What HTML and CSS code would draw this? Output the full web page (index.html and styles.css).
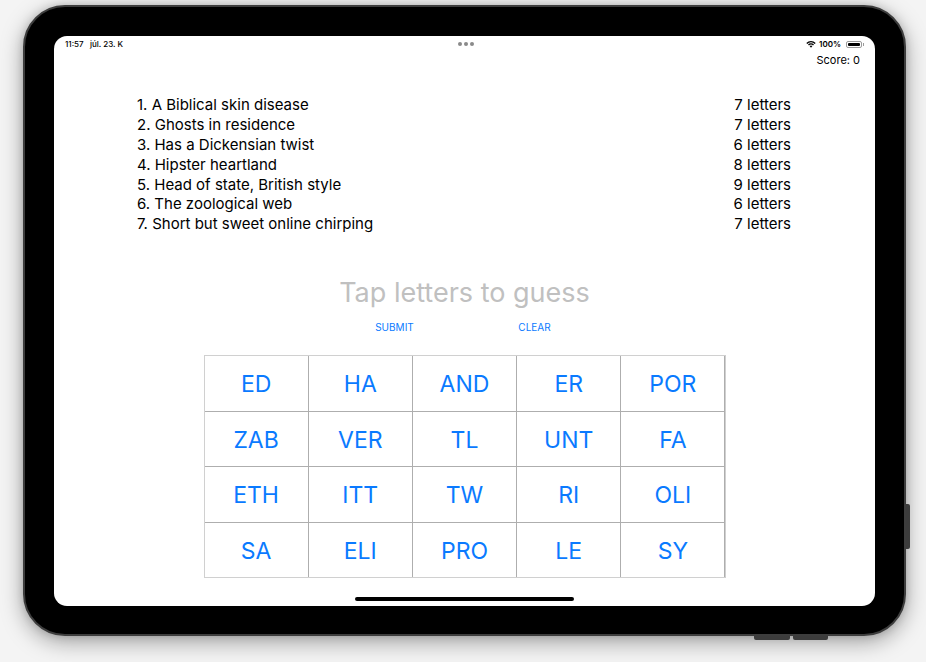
FILE: index.html
```html
<!DOCTYPE html>
<html>
<head>
<meta charset="utf-8">
<link rel="stylesheet" href="styles.css">
</head>
<body>
<div class="device">
  <div class="side-btn"></div>
  <div class="vol vol-a"></div>
  <div class="vol vol-b"></div>
  <div class="screen">
    <div class="status">
      <div class="status-left">11:57&nbsp;&nbsp; júl. 23. K</div>
      <div class="status-dots"><span></span><span></span><span></span></div>
      <div class="status-right">
        <svg class="wifi" width="10" height="8" viewBox="0 0 10 8">
          <path d="M0.3 2.9 A6.6 6.6 0 0 1 9.7 2.9 L8.7 3.9 A5.2 5.2 0 0 0 1.3 3.9 Z" fill="#000"/>
          <path d="M2.0 4.6 A4.2 4.2 0 0 1 8.0 4.6 L7.0 5.6 A2.8 2.8 0 0 0 3.0 5.6 Z" fill="#000"/>
          <path d="M3.7 6.3 A1.8 1.8 0 0 1 6.3 6.3 L5 7.7 Z" fill="#000"/>
        </svg>
        <span class="pct">100%</span>
        <span class="battery"><span class="battery-fill"></span></span><span class="battery-nub"></span>
      </div>
    </div>
    <div class="score-row">Score: 0</div>
    <div class="clues">
      <div class="clue"><span>1. A Biblical skin disease</span><span>7 letters</span></div>
      <div class="clue"><span>2. Ghosts in residence</span><span>7 letters</span></div>
      <div class="clue"><span>3. Has a Dickensian twist</span><span>6 letters</span></div>
      <div class="clue"><span>4. Hipster heartland</span><span>8 letters</span></div>
      <div class="clue"><span>5. Head of state, British style</span><span>9 letters</span></div>
      <div class="clue"><span>6. The zoological web</span><span>6 letters</span></div>
      <div class="clue"><span>7. Short but sweet online chirping</span><span>7 letters</span></div>
    </div>
    <div class="guess">Tap letters to guess</div>
    <div class="actions">
      <div class="action">SUBMIT</div>
      <div class="action">CLEAR</div>
    </div>
    <div class="grid">
      <div class="cell">ED</div><div class="cell">HA</div><div class="cell">AND</div><div class="cell">ER</div><div class="cell">POR</div>
      <div class="cell">ZAB</div><div class="cell">VER</div><div class="cell">TL</div><div class="cell">UNT</div><div class="cell">FA</div>
      <div class="cell">ETH</div><div class="cell">ITT</div><div class="cell">TW</div><div class="cell">RI</div><div class="cell">OLI</div>
      <div class="cell">SA</div><div class="cell">ELI</div><div class="cell">PRO</div><div class="cell">LE</div><div class="cell">SY</div>
    </div>
    <div class="home"></div>
  </div>
</div>
</body>
</html>
```

FILE: styles.css
```css
html, body {
  margin: 0;
  padding: 0;
}
body {
  width: 926px;
  height: 662px;
  overflow: hidden;
  background: #f4f4f4;
  font-family: Inter, "Noto Sans", sans-serif;
  color: #000;
}
.device {
  position: relative;
  box-sizing: border-box;
  margin: 5px 0 0 23px;
  width: 883px;
  height: 631px;
  border-radius: 42px;
  background: #000;
  border: 2px solid #3d3d3d;
  padding: 29px 29px 28px 29px;
  box-shadow: 0 6px 22px rgba(0,0,0,0.35), 0 0 8px rgba(0,0,0,0.15);
}
.side-btn {
  position: absolute;
  right: -6px;
  top: 497px;
  width: 4px;
  height: 45px;
  background: #3c3c3c;
  border-radius: 0 2px 2px 0;
}
.vol {
  position: absolute;
  bottom: -6px;
  height: 4px;
  width: 36px;
  background: #3c3c3c;
  border-radius: 0 0 2px 2px;
}
.vol-a { left: 729px; }
.vol-b { left: 768px; width: 35px; }
.screen {
  position: relative;
  width: 821px;
  height: 570px;
  background: #fff;
  border-radius: 13px;
  display: flex;
  flex-direction: column;
  align-items: stretch;
}
.status {
  height: 16px;
  display: flex;
  align-items: center;
  justify-content: space-between;
  padding: 0 11px;
  font-size: 8px;
  font-weight: 500;
  position: relative;
}
.status-left {
  width: 120px;
}
.status-dots {
  display: flex;
  gap: 2px;
  position: absolute;
  left: 404px;
  top: 6px;
}
.status-dots span {
  width: 4px;
  height: 4px;
  border-radius: 50%;
  background: #8a8a8a;
}
.status-right {
  display: flex;
  align-items: center;
  gap: 0;
}
.wifi { margin-right: 3px; }
.pct { margin-right: 5px; font-weight: 600; }
.battery {
  width: 16px;
  height: 7px;
  box-sizing: border-box;
  border: 1px solid #9a9a9a;
  border-radius: 2px;
  padding: 1px;
  display: flex;
}
.battery-fill {
  flex: 1;
  background: #000;
  border-radius: 1px;
}
.battery-nub {
  width: 1px;
  height: 3px;
  background: #9a9a9a;
  margin-left: 1px;
}
.score-row {
  height: 16px;
  line-height: 16px;
  font-size: 11px;
  text-align: right;
  padding-right: 15px;
}
.clues {
  margin-top: 27px;
  padding: 0 84px 0 83px;
  font-size: 15px;
  letter-spacing: 0;
}
.clue {
  display: flex;
  justify-content: space-between;
  height: 19.9px;
  line-height: 19.9px;
}
.guess {
  margin-top: 42px;
  height: 34px;
  line-height: 34px;
  text-align: center;
  font-size: 27px;
  color: #c0c0c0;
  letter-spacing: 0;
}
.actions {
  margin-top: 10px;
  display: flex;
  justify-content: center;
  gap: 40px;
}
.action {
  width: 100px;
  text-align: center;
  font-size: 10px;
  line-height: 14px;
  color: #0a7aff;
}
.grid {
  margin: 21px auto 0;
  width: 522px;
  height: 223px;
  box-sizing: border-box;
  border: 1px solid #d0d0d0;
  background: #aeaeae;
  display: grid;
  grid-template-columns: repeat(5, 1fr);
  grid-template-rows: repeat(4, 1fr);
  gap: 1px;
}
.cell {
  background: #fff;
  display: flex;
  align-items: center;
  justify-content: center;
  padding-top: 2px;
  color: #0a7aff;
  font-size: 23px;
}
.home {
  position: absolute;
  left: 301px;
  bottom: 5px;
  width: 219px;
  height: 4px;
  border-radius: 2px;
  background: #000;
}
```
